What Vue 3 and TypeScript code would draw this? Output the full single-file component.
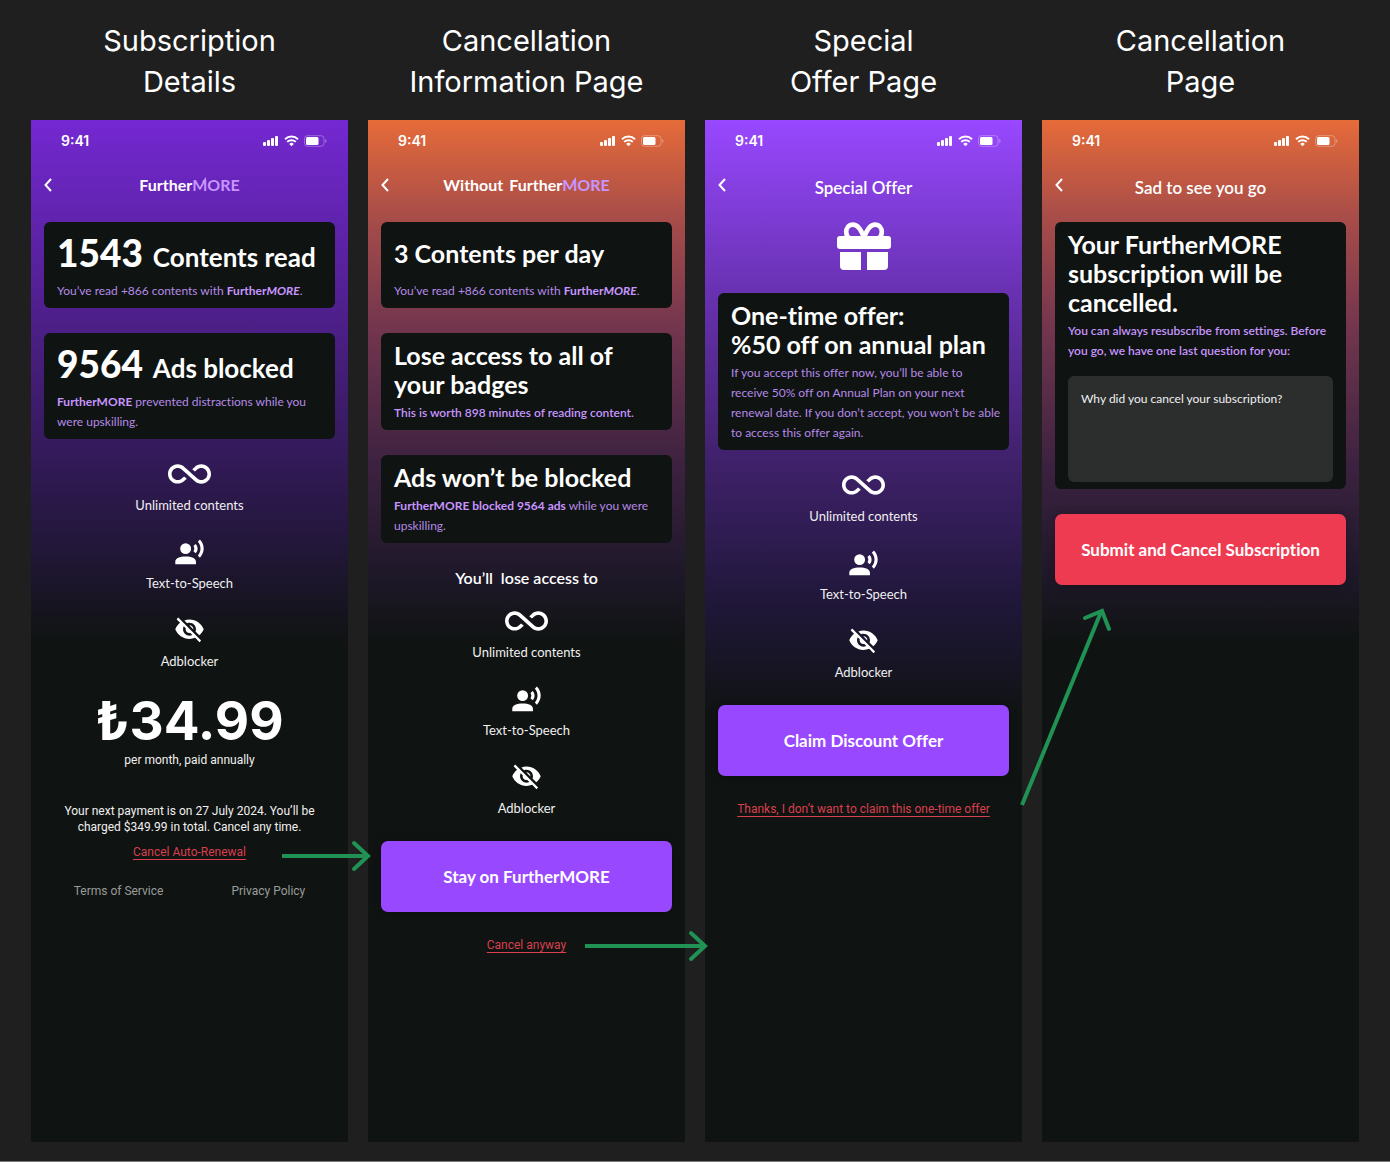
<script setup lang="ts">
type ScreenId = 'details' | 'info' | 'offer' | 'cancel'

interface Screen {
  id: ScreenId
  title: [string, string]
}

interface Feature {
  icon: 'infinity' | 'speech' | 'hidden'
  label: string
}

const screens: Screen[] = [
  { id: 'details', title: ['Subscription', 'Details'] },
  { id: 'info', title: ['Cancellation', 'Information Page'] },
  { id: 'offer', title: ['Special', 'Offer Page'] },
  { id: 'cancel', title: ['Cancellation', 'Page'] },
]

const features: Feature[] = [
  { icon: 'infinity', label: 'Unlimited contents' },
  { icon: 'speech', label: 'Text-to-Speech' },
  { icon: 'hidden', label: 'Adblocker' },
]
</script>

<template>
  <main class="board">
    <section v-for="s in screens" :key="s.id" class="column">
      <h1 class="column-title">{{ s.title[0] }}<br />{{ s.title[1] }}</h1>

      <div class="screen" :class="s.id">
        <div class="status">
          <span class="time">9:41</span>
          <svg class="status-icons" viewBox="0 0 64 12" aria-hidden="true">
            <g fill="#fff">
              <rect x="0" y="7" width="3" height="4" rx="1" />
              <rect x="4" y="5" width="3" height="6" rx="1" />
              <rect x="8" y="3" width="3" height="8" rx="1" />
              <rect x="12" y="1" width="3" height="10" rx="1" />
              <path d="M28.5 11.3l-2.3-2.4a3.3 3.3 0 0 1 4.6 0z" />
              <rect x="43" y="2" width="12.500" height="8" rx="1.500" />
            </g>
            <g fill="none" stroke="#fff" stroke-width="2">
              <path d="M22 4.200a9.300 9.300 0 0 1 13 0" />
              <path d="M24.200 6.900a6.200 6.200 0 0 1 8.600 0" />
            </g>
            <rect x="41.500" y="0.700" width="19.500" height="10.600" rx="3" fill="none" stroke="#fff" stroke-opacity=".3" />
            <path d="M62.300 4v4c1.600-.8 1.600-3.200 0-4z" fill="#fff" fill-opacity=".4" />
          </svg>
        </div>

        <header class="nav">
          <button class="back" type="button" aria-label="Back">
            <svg viewBox="0 0 8 14" aria-hidden="true">
              <path d="M7 1L1.500 7 7 13" fill="none" stroke="#fff" stroke-width="2" />
            </svg>
          </button>
          <h2 v-if="s.id === 'details' || s.id === 'info'" class="nav-title brand">
            <span v-if="s.id === 'info'" class="without">Without</span>
            <span>Further<span class="more">MORE<svg class="tick" viewBox="0 0 4 5" aria-hidden="true"><path d="M0 5L4 0v5z" fill="#c795ff" /></svg></span></span>
          </h2>
          <h2 v-else class="nav-title low">{{ s.id === 'offer' ? 'Special Offer' : 'Sad to see you go' }}</h2>
        </header>

        <svg v-if="s.id === 'offer'" class="gift" viewBox="0 0 54 48" aria-hidden="true">
          <g fill="none" stroke="#fff" stroke-width="4.600">
            <path d="M27 16C24 7 20 2.600 16 2.600c-4.500 0-6.800 3.600-6.800 7.400 0 3 1.800 5.500 4 6.500" />
            <path d="M27 16c3-9 7-13.400 11-13.400 4.500 0 6.800 3.600 6.800 7.400 0 3-1.800 5.500-4 6.500" />
          </g>
          <rect y="14" width="54" height="13" rx="3" fill="#fff" />
          <path d="M3 30h21v18H7a4 4 0 0 1-4-4zM30 30h21v14a4 4 0 0 1-4 4H30z" fill="#fff" />
        </svg>

        <div v-if="s.id === 'details'" class="cards">
          <article class="card">
            <h3 class="stat"><strong>1543</strong> Contents read</h3>
            <p class="note">You’ve read +866 contents with <b>Further<i>MORE</i></b>.</p>
          </article>
          <article class="card">
            <h3 class="stat"><strong>9564</strong> Ads blocked</h3>
            <p class="note"><b>FurtherMORE</b> prevented distractions while you<br />were upskilling.</p>
          </article>
        </div>

        <div v-else-if="s.id === 'info'" class="cards">
          <article class="card">
            <h3 class="heading tall">3 Contents per day</h3>
            <p class="note">You’ve read +866 contents with <b>Further<i>MORE</i></b>.</p>
          </article>
          <article class="card">
            <h3 class="heading">Lose access to all of<br />your badges</h3>
            <p class="note bright">This is worth 898 minutes of reading content.</p>
          </article>
          <article class="card">
            <h3 class="heading">Ads won’t be blocked</h3>
            <p class="note"><b>FurtherMORE blocked 9564 ads</b> while you were<br />upskilling.</p>
          </article>
        </div>

        <div v-else-if="s.id === 'offer'" class="cards">
          <article class="card">
            <h3 class="heading">One-time offer:<br />%50 off on annual plan</h3>
            <p class="note">
              If you accept this offer now, you’ll be able to<br />receive 50% off on Annual Plan on your next<br />renewal
              date. If you don’t accept, you won’t be able<br />to access this offer again.
            </p>
          </article>
        </div>

        <form v-else class="cards" @submit.prevent>
          <article class="card">
            <h3 class="heading">Your FurtherMORE<br />subscription will be<br />cancelled.</h3>
            <p class="note bright">You can always resubscribe from settings. Before<br />you go, we have one last question for you:</p>
            <textarea
              class="reason"
              aria-label="Why did you cancel your subscription?"
              placeholder="Why did you cancel your subscription?"
            ></textarea>
          </article>
          <button class="action danger" type="submit">Submit and Cancel Subscription</button>
        </form>

        <p v-if="s.id === 'info'" class="lose">You’ll&nbsp; lose access to</p>

        <ul v-if="s.id !== 'cancel'" class="features">
          <li v-for="f in features" :key="f.icon" class="feature">
            <span class="feature-icon">
              <svg v-if="f.icon === 'infinity'" class="wide" viewBox="0 6 24 12" aria-hidden="true">
                <path
                  transform="matrix(-1 0 0 1 24 0)"
                  d="M18.6 6.62c-1.44 0-2.8.56-3.77 1.53L12 10.66 10.48 12h.01L7.8 14.39c-.64.64-1.49.99-2.4.99-1.87 0-3.39-1.51-3.39-3.38S3.53 8.62 5.4 8.62c.91 0 1.76.35 2.44 1.03l1.13 1 1.51-1.34L9.22 8.2C8.2 7.18 6.84 6.62 5.4 6.62 2.42 6.62 0 9.04 0 12s2.42 5.38 5.4 5.38c1.44 0 2.8-.56 3.77-1.53l2.83-2.5.01.01L13.52 12h-.01l2.69-2.39c.64-.64 1.49-.99 2.4-.99 1.87 0 3.39 1.51 3.39 3.38s-1.52 3.38-3.39 3.38c-.9 0-1.76-.35-2.44-1.03l-1.14-1.01-1.51 1.34 1.27 1.12c1.02 1.01 2.37 1.57 3.82 1.57 2.98 0 5.4-2.41 5.4-5.38s-2.42-5.37-5.4-5.37z"
                />
              </svg>
              <svg v-else-if="f.icon === 'speech'" viewBox="0 0 24 24" aria-hidden="true">
                <circle cx="9" cy="9" r="4.200" />
                <path
                  d="M1 21v-1.800C1 16.200 4.500 15 9 15s8 1.200 8 4.200V21zM16.760 5.360l-1.680 1.690c.84 1.180.84 2.710 0 3.890l1.680 1.690c2.020-2.020 2.020-5.070 0-7.270zM20.070 2l-1.630 1.630c2.770 3.020 2.770 7.560 0 10.740L20.070 16c3.900-3.890 3.910-9.950 0-14z"
                />
              </svg>
              <svg v-else viewBox="0 0 24 24" aria-hidden="true">
                <path
                  transform="translate(0 -1)"
                  d="M12 7c2.760 0 5 2.240 5 5 0 .65-.13 1.260-.36 1.830l2.920 2.920c1.510-1.260 2.700-2.890 3.430-4.750-1.730-4.390-6-7.500-11-7.500-1.400 0-2.740.25-3.980.7l2.160 2.160C10.740 7.130 11.350 7 12 7zM2 4.270l2.280 2.280.46.46C3.080 8.300 1.780 10.020 1 12c1.730 4.390 6 7.500 11 7.500 1.550 0 3.030-.3 4.380-.84l.42.42L19.730 22 21 20.730 3.270 3 2 4.270zM7.530 9.800l1.550 1.550c-.05.21-.08.43-.08.65 0 1.660 1.340 3 3 3 .22 0 .44-.03.65-.08l1.550 1.550c-.67.33-1.410.53-2.200.53-2.760 0-5-2.240-5-5 0-.79.2-1.530.53-2.200zm4.310-.78l3.150 3.150.02-.16c0-1.660-1.340-3-3-3l-.17.010z"
                />
              </svg>
            </span>
            <span class="feature-label">{{ f.label }}</span>
          </li>
        </ul>

        <template v-if="s.id === 'details'">
          <p class="price">₺34.99</p>
          <p class="period">per month, paid annually</p>
          <p class="payment">Your next payment is on 27 July 2024. You’ll be<br />charged $349.99 in total. Cancel any time.</p>
          <div class="link-row close">
            <a href="#" class="leave">Cancel Auto-Renewal</a>
            <svg class="arrow low" width="90" height="32" viewBox="0 0 90 32" aria-hidden="true">
              <path d="M1 16h86" />
              <path d="M73 3l14 13-14 13" stroke-linecap="round" />
            </svg>
          </div>
          <nav class="legal">
            <a href="#">Terms of Service</a>
            <a href="#">Privacy Policy</a>
          </nav>
        </template>

        <template v-if="s.id === 'info'">
          <button class="action" type="button">Stay on FurtherMORE</button>
          <div class="link-row">
            <a href="#" class="leave">Cancel anyway</a>
            <svg class="arrow" width="124" height="32" viewBox="0 0 124 32" aria-hidden="true">
              <path d="M1 16h120" />
              <path d="M107 3l14 13-14 13" stroke-linecap="round" />
            </svg>
          </div>
        </template>

        <template v-if="s.id === 'offer'">
          <button class="action" type="button">Claim Discount Offer</button>
          <div class="link-row">
            <a href="#" class="leave">Thanks, I don’t want to claim this one-time offer</a>
            <svg class="arrow rising" width="92" height="200" viewBox="0 0 92 200" aria-hidden="true">
              <path d="M2 198L81 5" />
              <path d="M65 11l17-7 7 18" stroke-linecap="round" />
            </svg>
          </div>
        </template>
      </div>
    </section>
  </main>
</template>

<style>
body {
  margin: 0;
  background: #1f1f1f;
}
</style>

<style scoped>
.board {
  box-sizing: border-box;
  display: flex;
  gap: 20px;
  min-height: 100vh;
  padding: 20px 31px 19px;
  border-bottom: 1px solid #777;
  background: #1f1f1f;
  color: #fff;
  font-family: Lato, 'Liberation Sans', sans-serif;
}

.board,
.action,
.reason {
  font-variant-ligatures: no-common-ligatures;
}

.board h1,
.board h2,
.board h3,
.board p,
.board ul {
  margin: 0;
  padding: 0;
}

.column {
  flex: 1 1 0;
  min-width: 0;
  display: flex;
  flex-direction: column;
  gap: 18px;
}

.column-title {
  font-family: Inter, sans-serif;
  font-size: 29px;
  font-weight: 400;
  line-height: 41px;
  text-align: center;
}

.screen {
  flex: 1;
  position: relative;
  display: flex;
  flex-direction: column;
  padding: 0 13px 40px;
  background: #0f1311;
}

.details {
  background: linear-gradient(#7428d2 0, #4c1f87 205px, #24173d 415px, #0f1311 525px);
}

.info,
.cancel {
  background: linear-gradient(#e66b39 0, #a94d49 95px, #74364e 205px, #3c2240 345px, #1e1829 455px, #0f1311 525px);
}

.offer {
  background: linear-gradient(#9848ff 0, #6731b0 175px, #42226f 330px, #20173a 480px, #0f1311 600px);
}

.status {
  display: flex;
  align-items: center;
  justify-content: space-between;
  height: 42px;
  padding: 0 8px 0 17px;
}

.time {
  font-family: Inter, sans-serif;
  font-size: 14px;
  font-weight: 600;
  line-height: 20px;
}

.status-icons {
  width: 64px;
  height: 12px;
}

.nav {
  display: grid;
  grid-template-columns: 1fr auto 1fr;
  align-items: start;
  height: 46px;
  margin-bottom: 14px;
}

.back {
  justify-self: start;
  display: flex;
  align-items: center;
  height: 46px;
  padding: 0;
  border: 0;
  background: none;
}

.back svg {
  width: 8px;
  height: 14px;
}

.nav-title {
  font-size: 16px;
  font-weight: 600;
  line-height: 46px;
}

.nav-title.low {
  font-size: 17px;
  line-height: 52px;
}

.brand {
  display: flex;
  gap: 6px;
  font-weight: 700;
}

.more {
  position: relative;
  color: #c795ff;
}

.tick {
  position: absolute;
  left: 10px;
  top: 2px;
  width: 4px;
  height: 5px;
}

.gift {
  align-self: center;
  width: 54px;
  height: 48px;
  margin-bottom: 23px;
}

.cards {
  display: flex;
  flex-direction: column;
  gap: 25px;
}

.card {
  padding: 8px 13px 7px;
  border-radius: 6px;
  background: #0f1311;
}

.stat {
  display: flex;
  align-items: baseline;
  gap: 10px;
  height: 51px;
  font-size: 26px;
  font-weight: 700;
  line-height: 46px;
  white-space: nowrap;
}

.stat strong {
  font-size: 37px;
}

.card .heading {
  margin-bottom: 4px;
  font-size: 25px;
  font-weight: 700;
  line-height: 29px;
  white-space: nowrap;
}

.card .heading.tall {
  line-height: 47px;
}

.note {
  color: #b58ae8;
  font-size: 12px;
  line-height: 20px;
  white-space: nowrap;
}

.note b,
.bright {
  color: #c795ff;
  font-weight: 700;
}

.bright {
  font-weight: 600;
}

.reason {
  box-sizing: border-box;
  display: block;
  width: 100%;
  height: 106px;
  margin-top: 15px;
  padding: 13px;
  border: 0;
  border-radius: 6px;
  background: #2b2e2d;
  color: #fff;
  font-family: Lato, sans-serif;
  font-size: 12px;
  line-height: 20px;
  resize: none;
}

.reason::placeholder {
  color: #f0f0f0;
  opacity: 1;
}

.screen .lose {
  padding-top: 25px;
  margin-bottom: -2px;
  font-size: 16px;
  font-weight: 600;
  line-height: 20px;
  text-align: center;
}

.screen .features {
  display: flex;
  flex-direction: column;
  gap: 22px;
  margin-top: 19px;
  list-style: none;
}

.feature {
  display: flex;
  flex-direction: column;
  align-items: center;
  gap: 6px;
}

.feature-icon {
  display: flex;
  align-items: center;
  height: 32px;
}

.feature-icon svg {
  width: 31px;
  height: 31px;
  fill: #fff;
}

.feature-icon .wide {
  width: 43px;
  height: 22px;
}

.feature-label {
  color: #f0f0f0;
  font-size: 13px;
  line-height: 18px;
}

.screen .price {
  margin-top: 21px;
  font-family: Inter, sans-serif;
  font-size: 53px;
  font-weight: 700;
  line-height: 60px;
  text-align: center;
}

.period,
.payment,
.link-row,
.legal {
  font-family: Roboto, sans-serif;
  font-size: 12px;
  line-height: 18px;
  text-align: center;
}

.period,
.payment {
  color: #f0f0f0;
}

.screen .payment {
  margin-top: 34px;
  line-height: 16px;
}

.link-row {
  position: relative;
  margin-top: 24px;
}

.link-row.close {
  margin-top: 8px;
}

.leave {
  color: #d8404f;
  text-decoration: underline;
  text-underline-offset: 3px;
}

.arrow {
  position: absolute;
  z-index: 1;
  right: -36px;
  top: -6px;
  fill: none;
  stroke: #1f9254;
  stroke-width: 4;
}

.arrow.low {
  top: -3px;
}

.arrow.rising {
  left: calc(100% + 11px);
  right: auto;
  top: -193px;
}

.legal {
  display: flex;
  justify-content: center;
  gap: 68px;
  margin-top: 21px;
}

.legal a {
  color: #9a9c9b;
  text-decoration: none;
}

.action {
  height: 71px;
  margin-top: 24px;
  padding: 0;
  border: 0;
  border-radius: 7px;
  background: #9848ff;
  box-shadow: 0 0 8px rgba(0, 0, 0, 0.25);
  color: #fff;
  font-family: Lato, sans-serif;
  font-size: 17px;
  font-weight: 700;
  line-height: 20px;
}

.action.danger {
  margin-top: 0;
  background: #ef3b51;
}
</style>
